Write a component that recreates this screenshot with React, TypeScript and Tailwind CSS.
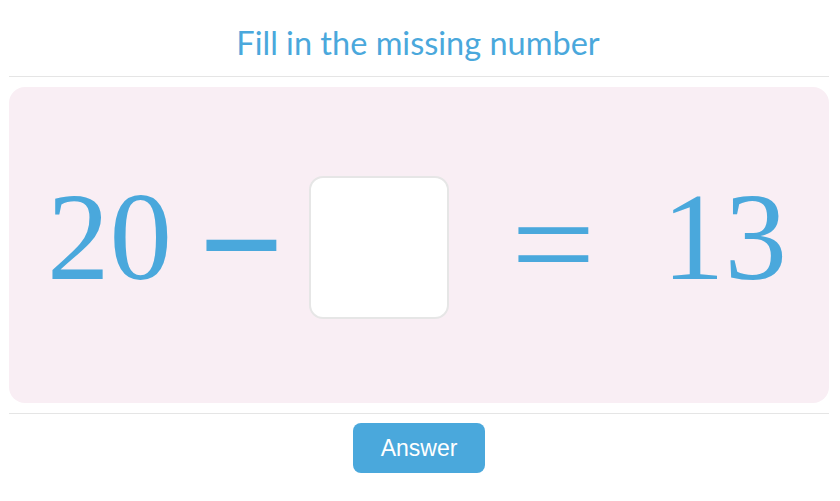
export default function App() {
  return (
    <div className="w-[840px] h-[501px] bg-white flex flex-col">
      <div className="ml-[9px] w-[820px] h-[77px] flex items-center justify-center border-b border-[#e5e5e5]">
        <h1 className="text-[32.5px] text-[#4aa8dc] pt-[10px] ml-[-2px]" style={{ fontFamily: '"Lato", sans-serif' }}>
          Fill in the missing number
        </h1>
      </div>
      <div className="ml-[9px] w-[820px] mt-[10px] h-[316px] rounded-[16px] bg-[#f9eef4] flex items-center pl-[38px]">
        <div className="flex items-center text-[#4aa8dc] text-[125px] leading-none" style={{ fontFamily: '"Liberation Serif", serif' }}>
          <span className="pb-[16px]">20</span>
          <span className="ml-[34px] inline-block scale-x-[1.2] scale-y-[1.8]">−</span>
          <div className="ml-[32px] mt-[4px] w-[140px] h-[143px] bg-white border-2 border-[#e6e6e6] rounded-[14px]" />
          <span className="ml-[69px] inline-block scale-x-[1.2] scale-y-[1.1]">=</span>
          <span className="ml-[74px] pb-[16px]">13</span>
        </div>
      </div>
      <div className="ml-[9px] w-[820px] mt-[10px] border-t border-[#e5e5e5] flex justify-center pt-[9px]">
        <button className="w-[132px] h-[50px] rounded-[8px] bg-[#4aa8dc] text-white text-[23px]" style={{ fontFamily: '"Liberation Sans", sans-serif' }}>
          Answer
        </button>
      </div>
    </div>
  );
}
